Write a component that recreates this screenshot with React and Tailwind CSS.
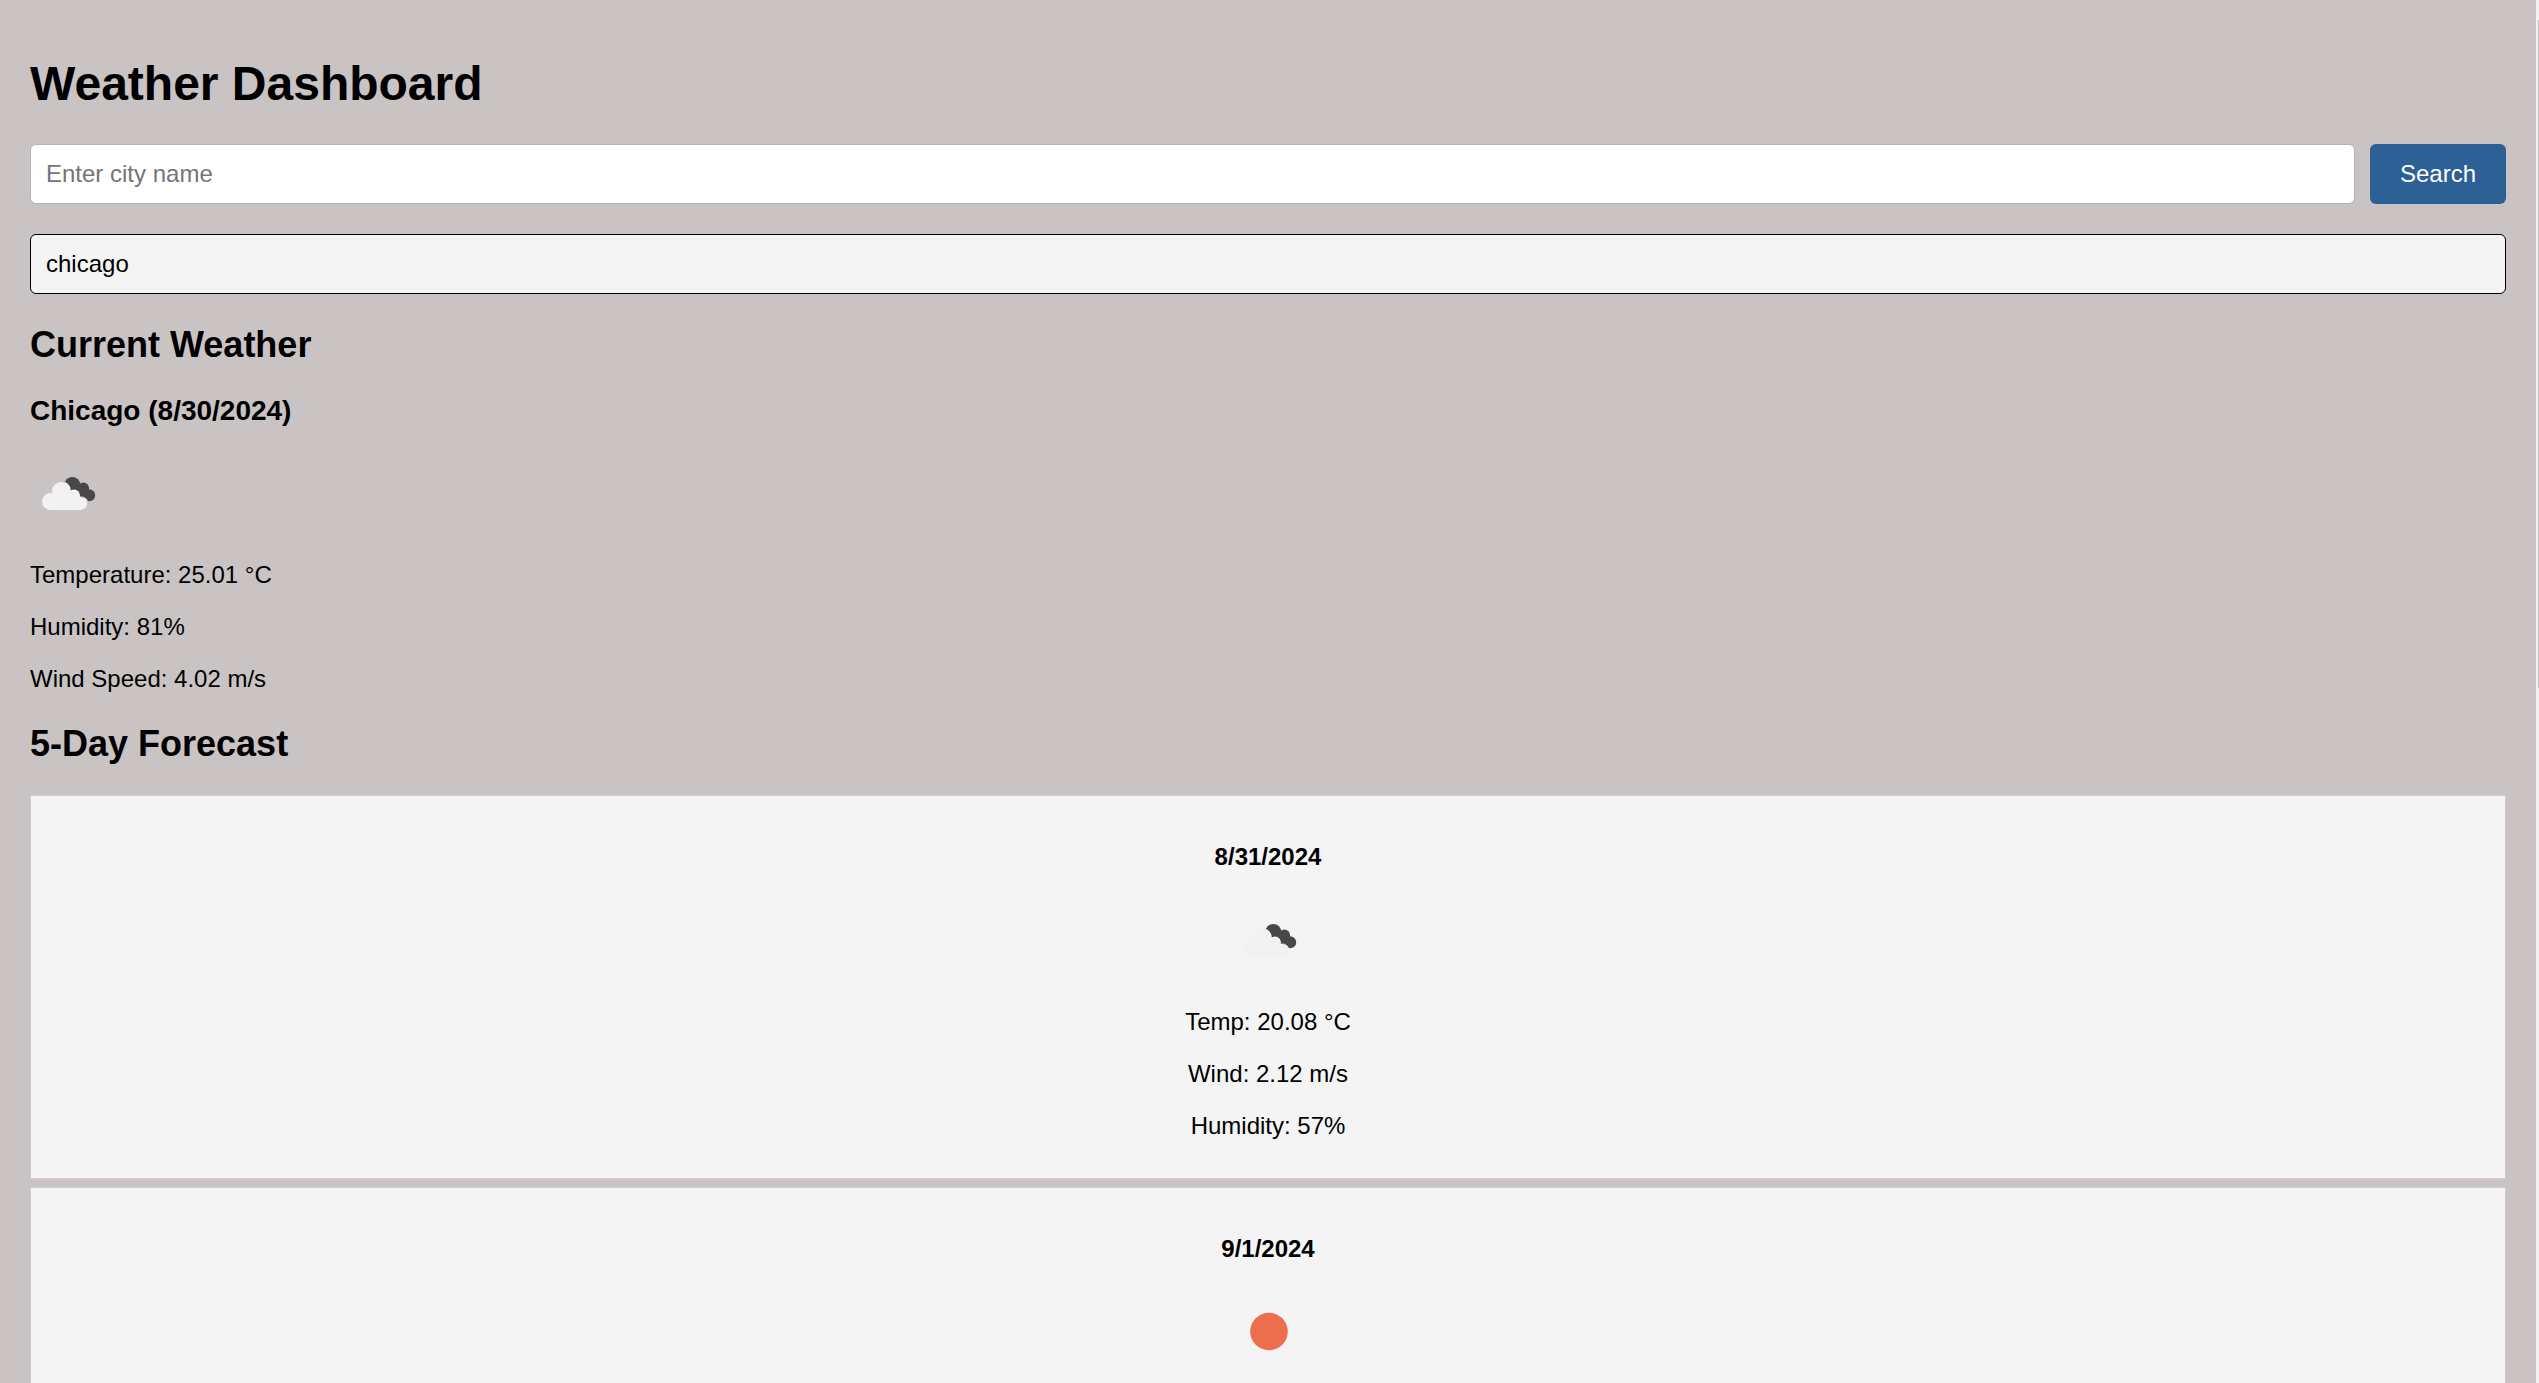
import React, { useId } from "react";

const CLOUD = [
  [20.5, 47.5, 8.5],
  [31, 37, 9],
  [44, 41.4, 5],
  [51, 49.6, 6.2],
];

const DARK = [
  [42.3, 31, 8],
  [53.3, 34.4, 5.8],
  [59.2, 41.3, 6],
  [49, 38, 6.5],
];

function circles(list, grow = 0) {
  return list.map(([x, y, r]) => <circle key={x} cx={x} cy={y} r={r + grow} />);
}

function CloudIcon() {
  const clip = useId();
  return (
    <svg viewBox="0 0 75 75" className="size-[75px]" role="img" aria-label="Broken clouds">
      <clipPath id={clip}>{circles(DARK)}</clipPath>
      <g fill="#48484a">{circles(DARK)}</g>
      <g fill="#ffffff" clipPath={`url(#${clip})`}>
        {circles(CLOUD, 0.9)}
      </g>
      <g fill="#f2f2f2">
        {circles(CLOUD)}
        <path d="M20.5 56 H51 V46 L44 40 H24 L20 44 Z" />
      </g>
    </svg>
  );
}

function SunIcon() {
  return (
    <svg viewBox="0 0 75 75" className="size-[75px]" role="img" aria-label="Clear sky">
      <circle cx="38" cy="38.5" r="18.8" fill="#ec6e4c" />
    </svg>
  );
}

function Readings({ items }) {
  return (
    <div className="flex flex-col gap-6">
      {items.map((text) => (
        <p key={text}>{text}</p>
      ))}
    </div>
  );
}

const FORECAST = [
  {
    date: "8/31/2024",
    Icon: CloudIcon,
    readings: ["Temp: 20.08 °C", "Wind: 2.12 m/s", "Humidity: 57%"],
  },
  { date: "9/1/2024", Icon: SunIcon, readings: [] },
];

function ForecastCard({ date, Icon, readings }) {
  return (
    <article className="flex flex-col items-center border border-[#d0cccc] bg-[#f4f4f4] px-4 pt-[47px] pb-[38px] text-center">
      <h4 className="mb-[30px] font-bold">{date}</h4>
      <div className="mb-8">
        <Icon />
      </div>
      <Readings items={readings} />
    </article>
  );
}

export default function App() {
  return (
    <div className="flex h-screen overflow-hidden bg-[#c9c3c3] font-['Liberation_Sans',Arial,sans-serif] text-[24px] leading-[28px] text-black">
      <main className="min-w-0 flex-1 px-[30px] pt-14">
        <h1 className="mb-8 text-[48px] leading-[56px] font-bold">Weather Dashboard</h1>

        <form className="mb-[30px] flex gap-[15px]" onSubmit={(e) => e.preventDefault()}>
          <input
            type="text"
            aria-label="City name"
            placeholder="Enter city name"
            className="h-[60px] min-w-0 flex-1 rounded-md border border-[#b5b3b3] bg-white px-[15px] placeholder:text-[#757575]"
          />
          <button type="submit" className="h-[60px] rounded-md bg-[#2d6095] px-[30px] text-white">
            Search
          </button>
        </form>

        <button
          type="button"
          className="mb-[30px] block h-[60px] w-full rounded-md border border-black bg-[#f4f4f4] px-[15px] text-left"
        >
          chicago
        </button>

        <section className="mb-[30px]">
          <h2 className="mb-7 text-[36px] leading-[42px] font-bold">Current Weather</h2>
          <h3 className="mb-[26px] text-[28px] leading-[34px] font-bold">Chicago (8/30/2024)</h3>
          <div className="mb-8">
            <CloudIcon />
          </div>
          <Readings items={["Temperature: 25.01 °C", "Humidity: 81%", "Wind Speed: 4.02 m/s"]} />
        </section>

        <section>
          <h2 className="mb-[30px] text-[36px] leading-[42px] font-bold">5-Day Forecast</h2>
          <div className="flex flex-col gap-2">
            {FORECAST.map((day) => (
              <ForecastCard key={day.date} {...day} />
            ))}
          </div>
        </section>
      </main>

      <div className="w-[3px] shrink-0 bg-[#f1f1f1] pt-5 pl-[2px]" aria-hidden="true">
        <div className="h-[49%] bg-[#c1c1c1]" />
      </div>
    </div>
  );
}
